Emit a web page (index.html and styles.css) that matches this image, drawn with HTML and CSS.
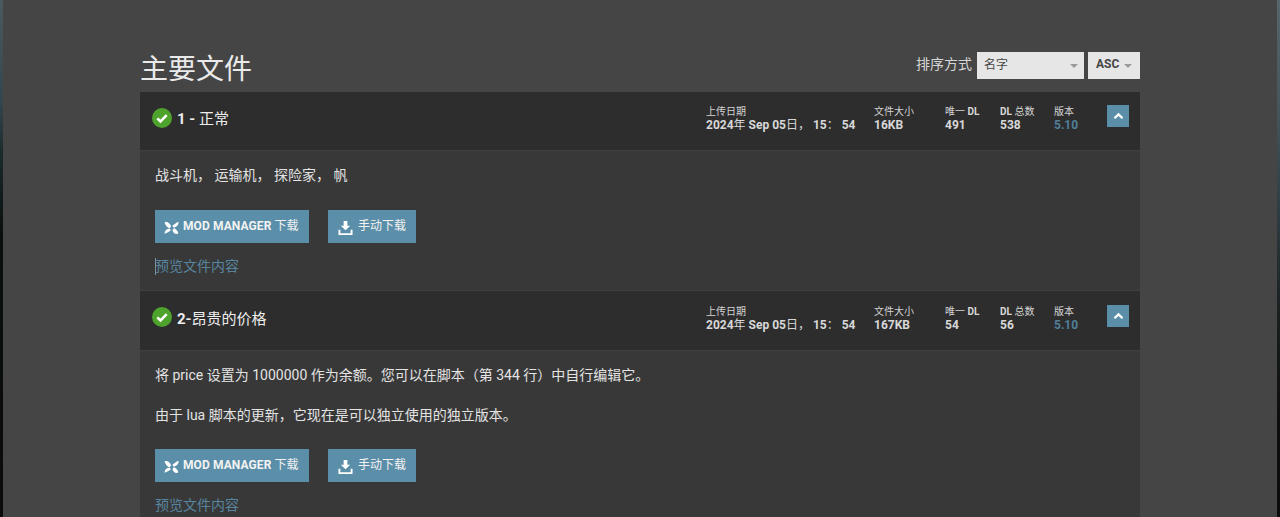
FILE: index.html
```html
<!DOCTYPE html>
<html lang="zh">
<head>
<meta charset="utf-8">
<title>主要文件</title>
<link rel="stylesheet" href="styles.css">
</head>
<body>
<main class="page">
  <div class="content">
    <div class="top">
      <h1 class="title">主要文件</h1>
      <div class="sort">
        <span class="sort-label">排序方式</span>
        <div class="select select-name"><span>名字</span><i class="caret"></i></div>
        <div class="select select-dir"><span>ASC</span><i class="caret"></i></div>
      </div>
    </div>

    <section class="file">
      <header class="file-head">
        <svg class="ok" viewBox="0 0 20 20"><circle cx="10" cy="10" r="10" fill="#4ea32c"/><path d="M5.3 10.4l3.2 3.1 6.2-6.3" fill="none" stroke="#fff" stroke-width="2.6"/></svg>
        <h3 class="file-name"><b>1 -</b> 正常</h3>
        <div class="stats">
          <div class="stat stat-date"><span class="k">上传日期</span><b>2024<i>年</i> Sep 05<i>日，</i> 15<i>：</i> 54</b></div>
          <div class="stat stat-size"><span class="k">文件大小</span><b>16KB</b></div>
          <div class="stat stat-uniq"><span class="k">唯一 <b>DL</b></span><b>491</b></div>
          <div class="stat stat-total"><span class="k"><b>DL</b> 总数</span><b>538</b></div>
          <div class="stat stat-ver"><span class="k">版本</span><b class="ver">5.10</b></div>
        </div>
        <button class="toggle"><svg viewBox="0 0 12 8"><path d="M1.600 6.400L6 2.200l4.400 4.200" fill="none" stroke="#fff" stroke-width="2.400"/></svg></button>
      </header>
      <div class="file-body">
        <p class="desc">战斗机， 运输机， 探险家， 帆</p>
        <div class="actions">
          <a class="btn btn-mm"><svg class="ico-mm" viewBox="0 0 15 13"><path d="M.5 1.500C3 .2 5.800 1.800 7.200 5.400L5.400 7.200C3.300 6.600 1.600 4.500.5 1.500zM14.500.7c.5 2.800-1.500 5.500-4.800 6L8.300 5C10 3.300 12.200 1.700 14.500.7zM.6 12.700C.3 10 2.600 7.800 5.500 7.500L7 9.100C5.200 10.800 3 12.200.6 12.700zM14.400 12.300c-2.300 1.500-5 .1-6-3.300L10 7.300c1.700.5 3.500 2.200 4.400 5z" fill="#fff"/></svg><span class="btn-text"><b>MOD MANAGER</b> 下载</span></a>
          <a class="btn btn-manual"><svg class="ico-dl" viewBox="0 0 16 16"><path d="M6 1h4v5h3l-5 5-5-5h3zM0.500 10.500h2v3.500h11v-3.500h2v5.500h-15z" fill="#fff"/></svg><span class="btn-text">手动下载</span></a>
        </div>
        <a class="preview preview-focus">预览文件内容</a>
      </div>
    </section>

    <section class="file">
      <header class="file-head">
        <svg class="ok" viewBox="0 0 20 20"><circle cx="10" cy="10" r="10" fill="#4ea32c"/><path d="M5.3 10.4l3.2 3.1 6.2-6.3" fill="none" stroke="#fff" stroke-width="2.6"/></svg>
        <h3 class="file-name"><b>2-</b>昂贵的价格</h3>
        <div class="stats">
          <div class="stat stat-date"><span class="k">上传日期</span><b>2024<i>年</i> Sep 05<i>日，</i> 15<i>：</i> 54</b></div>
          <div class="stat stat-size"><span class="k">文件大小</span><b>167KB</b></div>
          <div class="stat stat-uniq"><span class="k">唯一 <b>DL</b></span><b>54</b></div>
          <div class="stat stat-total"><span class="k"><b>DL</b> 总数</span><b>56</b></div>
          <div class="stat stat-ver"><span class="k">版本</span><b class="ver">5.10</b></div>
        </div>
        <button class="toggle"><svg viewBox="0 0 12 8"><path d="M1.600 6.400L6 2.200l4.400 4.200" fill="none" stroke="#fff" stroke-width="2.400"/></svg></button>
      </header>
      <div class="file-body">
        <p class="desc">将 price 设置为 1000000 作为余额。您可以在脚本（第 344 行）中自行编辑它。</p>
        <p class="desc">由于 lua 脚本的更新，它现在是可以独立使用的独立版本。</p>
        <div class="actions">
          <a class="btn btn-mm"><svg class="ico-mm" viewBox="0 0 15 13"><path d="M.5 1.500C3 .2 5.800 1.800 7.200 5.400L5.400 7.200C3.300 6.600 1.600 4.500.5 1.500zM14.500.7c.5 2.800-1.500 5.500-4.800 6L8.300 5C10 3.300 12.200 1.700 14.500.7zM.6 12.700C.3 10 2.600 7.800 5.500 7.500L7 9.100C5.200 10.800 3 12.200.6 12.700zM14.400 12.300c-2.300 1.500-5 .1-6-3.300L10 7.300c1.700.5 3.500 2.200 4.400 5z" fill="#fff"/></svg><span class="btn-text"><b>MOD MANAGER</b> 下载</span></a>
          <a class="btn btn-manual"><svg class="ico-dl" viewBox="0 0 16 16"><path d="M6 1h4v5h3l-5 5-5-5h3zM0.500 10.500h2v3.500h11v-3.500h2v5.500h-15z" fill="#fff"/></svg><span class="btn-text">手动下载</span></a>
        </div>
        <a class="preview">预览文件内容</a>
      </div>
    </section>
  </div>
</main>
</body>
</html>
```
FILE: styles.css
```css
* { box-sizing: border-box; }
html, body { margin: 0; height: 100%; }
body {
  height: 517px;
  overflow: hidden;
  background:
    linear-gradient(180deg, #57666c 0%, #46565c 20%, #2f3e44 40%, #1a2020 60%, #0e0e0e 80%, #0c0c0c 100%) right top / 50% 100% no-repeat,
    linear-gradient(180deg, #4a5a60 0%, #33454d 20%, #1a2a2a 30%, #0a0f0f 45%, #0b0b0b 100%) left top / 50% 100% no-repeat;
  font-family: Roboto, "Noto Sans CJK SC", sans-serif;
  color: #eaeaea;
}
.page {
  width: 1274px;
  height: 517px;
  margin: 0 auto;
  background: #454545;
  padding: 0 137px;
}
.content { width: 1000px; }
.top {
  display: flex;
  justify-content: space-between;
  align-items: flex-start;
  height: 92px;
  padding-top: 52px;
}
.title {
  margin: 1px 0 0;
  font-size: 28px;
  font-weight: 400;
  line-height: 34px;
  color: #eaeaea;
}
.sort { display: flex; align-items: center; height: 27px; }
.sort-label { font-size: 14px; color: #d6d6d6; margin: -6px 5px 0 0; }
.select {
  display: flex;
  align-items: center;
  justify-content: space-between;
  height: 27px;
  background: #e6e6e6;
  color: #444;
  font-size: 12px;
  padding-bottom: 4px;
}
.select-name { width: 107px; padding-left: 7px; padding-right: 6px; }
.select-dir { width: 52px; margin-left: 4px; padding-left: 8px; padding-right: 8px; font-weight: 700; }
.caret {
  width: 0; height: 0;
  margin-top: 4px;
  border-left: 4px solid transparent;
  border-right: 4px solid transparent;
  border-top: 4px solid #9a9a9a;
}
.file + .file { border-top: 1px solid #404040; }
.file-head {
  display: flex;
  align-items: center;
  height: 59px;
  background: #2d2d2d;
  border-bottom: 1px solid #404040;
  padding: 0 11px 0 12px;
}
.file + .file .file-head { height: 60px; padding-top: 1px; }
.ok { width: 20px; height: 20px; margin: -6px 5px 0 0; flex: none; }
.file + .file .ok { margin-top: -8px; }
.file-name {
  margin: -8px 0 0;
  font-size: 15px;
  font-weight: 400;
  color: #eeeeee;
  flex: 1;
}
.file-name b { font-weight: 700; }
.stats { display: flex; margin-top: -6px; }
.stat { display: flex; flex-direction: column; font-size: 12px; line-height: 13px; }
.stat .k { font-size: 10px; color: #d4d4d4; font-weight: 400; margin-bottom: 1px; }
.stat b { color: #d8d8d8; font-weight: 700; }
.stat b i { font-style: normal; font-weight: 400; }
.stat b.ver { color: #517f98; font-weight: 700; }
.stat-date { width: 168px; }
.stat-size { width: 71px; }
.stat-uniq { width: 55px; }
.stat-total { width: 54px; }
.stat-ver { width: 53px; }
.toggle {
  width: 22px; height: 22px;
  padding: 0;
  border: 0;
  background: #5b8fa9;
  display: flex;
  align-items: center;
  justify-content: center;
  margin-top: -10px;
}
.toggle svg { width: 11px; height: 8px; }
.file-body {
  background: #383838;
  padding: 14px 15px 0;
  height: 139px;
}
.file + .file .file-body { height: 180px; }
.desc {
  margin: 0 0 20px;
  font-size: 14px;
  line-height: 20px;
  color: #e3e3e3;
}
.actions { display: flex; gap: 19px; padding-top: 5px; }
.file + .file .actions { padding-top: 4px; }
.btn {
  display: flex;
  align-items: center;
  height: 33px;
  background: #5b8ea8;
  color: #f2f2f2;
  font-size: 12px;
  white-space: nowrap;
}
.btn b { font-weight: 700; letter-spacing: .1px; }
.btn-text { margin-top: -4px; }
.btn-mm { width: 154px; padding-left: 9px; }
.btn-manual { width: 88px; padding-left: 10px; }
.ico-mm { width: 15px; height: 13px; margin: 1px 4px 0 0; }
.ico-dl { width: 15px; height: 15px; margin: 1px 5px 0 0; }
.preview {
  display: block;
  position: relative;
  margin-top: 13px;
  font-size: 14px;
  line-height: 20px;
  color: #57859f;
}
.preview-focus::before {
  content: "";
  position: absolute;
  left: 0;
  top: 2px;
  width: 1px;
  height: 17px;
  background: #7d929c;
}
```
